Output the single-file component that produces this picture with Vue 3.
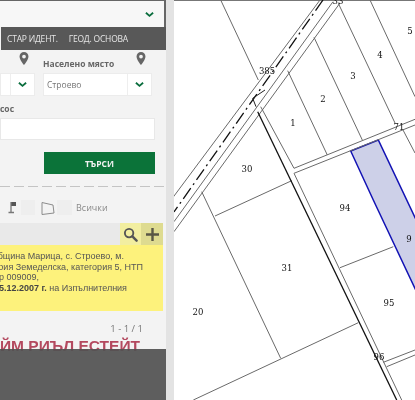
<script setup>
const lines = [
  [220.7,0,258.3,80],[320,0,173.3,197],[333,1.7,174,221.7],[340,3,174,231.7],
  [338.3,3.3,395,123],[403,130,415,153],[370,0,415,96.7],[314,37.3,362.3,140],[287.7,70.7,327.3,155],
  [260.7,106.7,294,168.3],[294,168.3,415,119.3],[294,173.3,415,125],[294,173.3,401.7,400],
  [215,216,291.7,180.7],[201.7,191.7,280.7,358.3],[193.3,400,358.3,322.7],[340,267.7,393.3,246.7],
  [383.3,362.3,415,350],[386.7,366.7,415,355]
]
const labels = [
  ['385',267,74],['5',410,34],['4',380,58],['3',353,79],['2',323,102],['1',293,126],['71',399,130],
  ['30',247,172],['94',345,211],['9',409,242],['31',287,271],['95',389,306],['20',198,315],['96',379,360],['33',338,4]
]
</script>

<template>
  <div class="page">
    <aside class="panel">
      <div class="top-select">
        <svg class="chev" viewBox="0 0 10 7"><path d="M1 1.500l4 3.500 4-3.500" /></svg>
      </div>
      <nav class="tabs">
        <span class="tab-stub"></span>
        <span class="tab">СТАР ИДЕНТ.</span>
        <span class="tab">ГЕОД. ОСНОВА</span>
      </nav>
      <div class="fields">
        <div class="field first">
          <div class="label-row">
            <svg class="pin" viewBox="0 0 12 16"><path fill-rule="evenodd" d="M6 0a5.500 5.500 0 0 0-5.500 5.500C.5 9.500 6 16 6 16s5.500-6.500 5.500-10.500A5.500 5.500 0 0 0 6 0zm0 3.300a2.300 2.300 0 1 1 0 4.600 2.300 2.300 0 0 1 0-4.600z" /></svg>
          </div>
          <div class="select">
            <span class="value"></span>
            <span class="arrow"><svg class="chev" viewBox="0 0 10 7"><path d="M1 1.500l4 3.500 4-3.500" /></svg></span>
          </div>
        </div>
        <div class="field second">
          <div class="label-row">
            <span class="label">Населено място</span>
            <svg class="pin" viewBox="0 0 12 16"><path fill-rule="evenodd" d="M6 0a5.500 5.500 0 0 0-5.500 5.500C.5 9.500 6 16 6 16s5.500-6.500 5.500-10.500A5.500 5.500 0 0 0 6 0zm0 3.300a2.300 2.300 0 1 1 0 4.600 2.300 2.300 0 0 1 0-4.600z" /></svg>
          </div>
          <div class="select">
            <span class="value">Строево</span>
            <span class="arrow"><svg class="chev" viewBox="0 0 10 7"><path d="M1 1.500l4 3.500 4-3.500" /></svg></span>
          </div>
        </div>
      </div>
      <div class="label addr">сос</div>
      <div class="input"></div>
      <button class="search">ТЪРСИ</button>
      <div class="dash"></div>
      <div class="filters">
        <svg class="f-flag" viewBox="0 0 10 13"><path d="M3 1h5v4H3z" fill="#555" /><path d="M3 1v10M.5 11.500h5.500" stroke="#777" stroke-width="1.300" fill="none" /></svg>
        <span class="ghost g1"></span>
        <svg class="f-poly" viewBox="0 0 14 14"><path d="M1 1.500l11 2.500 1 8-12 1.500z" fill="none" stroke="#8c8c8c" /></svg>
        <span class="ghost g2"></span>
        <span class="all">Всички</span>
      </div>
      <div class="card">
        <div class="card-head">
          <span class="head-fill"></span>
          <span class="btn-search">
            <svg viewBox="0 0 16 16"><circle cx="6.500" cy="6.500" r="4.500" fill="none" stroke="#555" stroke-width="2" /><path d="M10 10l4.500 4.500" stroke="#555" stroke-width="2.600" stroke-linecap="round" /></svg>
          </span>
          <span class="btn-plus">
            <svg viewBox="0 0 14 14"><path d="M7 0v14M0 7h14" stroke="#595745" stroke-width="2.600" /></svg>
          </span>
        </div>
        <div class="card-body">
          <div class="line l1"><span>Община Марица, с. Строево, м.</span></div>
          <div class="line l2"><span>територия Земеделска, категория 5, НТП</span></div>
          <div class="line l3"><span>р 009009,</span></div>
          <div class="line l4"><span><b>05.12.2007 г.</b> на Изпълнителния</span></div>
        </div>
      </div>
      <div class="pager">1 - 1 / 1</div>
      <div class="brand"><span>ЙМ РИЪЛ ЕСТЕЙТ</span></div>
      <footer class="foot"></footer>
    </aside>
    <div class="gutter"></div>
    <svg class="map" viewBox="174 0 241 400">
      <polygon class="parcel" points="350.700,151 378.300,140 420,228 420,299 373.300,200" />
      <line v-for="(l, i) in lines" :key="i" :x1="l[0]" :y1="l[1]" :x2="l[2]" :y2="l[3]" class="ln" />
      <line x1="323" y1="0" x2="174" y2="212" class="axis" />
      <polyline points="257.700,111.700 396.700,400" class="bold" />
      <polyline points="265,90 252.700,98.300 256,106.700" class="thin" />
      <text v-for="t in labels" :key="t[0]" :x="t[1]" :y="t[2]" class="num">{{ t[0] }}</text>
    </svg>
  </div>
</template>

<style scoped>
.page {
  width: 415px;
  height: 400px;
  display: flex;
  overflow: hidden;
  background: #fff;
  font-family: "Open Sans", "Liberation Sans", sans-serif;
  box-shadow: inset 0 1px 0 #777;
  filter: blur(0.35px);
}
.panel {
  width: 166px;
  height: 400px;
  flex: none;
  overflow: hidden;
  background: #f3f3f3;
  display: flex;
  flex-direction: column;
  border-top: 1px solid #666;
  box-sizing: border-box;
}
.top-select {
  height: 26px;
  box-sizing: border-box;
  background: #f7f7f7;
  border-right: 2px solid #666;
  display: flex;
  align-items: center;
  justify-content: flex-end;
  padding-right: 10px;
  flex: none;
}
.chev { width: 9px; height: 7px; }
.chev path { fill: none; stroke: #0b6e3e; stroke-width: 2; }
.tabs {
  height: 23px;
  flex: none;
  background: #585858;
  display: flex;
  align-items: center;
  color: #e6e6e6;
  font-size: 8.500px;
  letter-spacing: -0.2px;
}
.tab-stub { width: 1px; height: 100%; background: #f3f3f3; margin-right: 6px; }
.tab { margin-right: 11px; white-space: nowrap; }
.tab + .tab { margin-right: 0; }
.fields { display: flex; height: 46px; flex: none; }
.field { display: flex; flex-direction: column; flex: none; }
.first { width: 35px; margin-right: 8px; }
.second { width: 109px; }
.label-row {
  height: 23px;
  position: relative;
  display: flex;
  align-items: flex-end;
}
.pin { width: 10px; height: 13px; fill: #666; flex: none; }
.first .pin { margin: 0 0 8px 19px; }
.second .pin { position: absolute; left: 93px; top: 2px; }
.label { font-size: 8.500px; font-weight: 700; color: #666; line-height: 12px; padding-bottom: 3px; white-space: nowrap; }
.select {
  height: 23px;
  background: #fff;
  border: 1px solid #ececec;
  box-sizing: border-box;
  display: flex;
  align-items: center;
}
.value { flex: 1; font-size: 8.500px; color: #777; padding-left: 3px; }
.arrow {
  width: 23px;
  height: 100%;
  flex: none;
  border-left: 1px solid #eee;
  display: flex;
  align-items: center;
  justify-content: center;
}
.addr { margin-top: 7px; height: 12px; line-height: 12px; padding-bottom: 0; flex: none; }
.input {
  flex: none;
  margin-top: 3px;
  width: 155px;
  height: 22px;
  box-sizing: border-box;
  background: #fff;
  border: 1px solid #e8e8e8;
}
.search {
  flex: none;
  margin: 12px 0 0 44px;
  width: 111px;
  height: 22px;
  padding: 0;
  border: none;
  background: #0b7339;
  color: #f2f2f2;
  font: 700 8.500px "Open Sans", "Liberation Sans", sans-serif;
}
.dash {
  flex: none;
  margin-top: 12px;
  height: 1px;
  width: 164px;
  background: repeating-linear-gradient(90deg, #c4c4c4 0 10px, transparent 10px 14px);
}
.filters {
  flex: none;
  height: 36px;
  box-sizing: border-box;
  padding-top: 5px;
  display: flex;
  align-items: center;
}
.f-flag { width: 10px; height: 13px; margin-left: 8px; flex: none; }
.ghost { height: 15px; background: #eee; flex: none; }
.g1 { width: 14px; margin-left: 3px; }
.f-poly { width: 14px; height: 14px; margin-left: 6px; flex: none; }
.g2 { width: 15px; margin-left: 2px; }
.all { margin-left: 4px; font-size: 9px; color: #8a8a8a; }
.card { flex: none; width: 163px; }
.card-head { height: 22px; display: flex; background: #e9e9e9; }
.head-fill { flex: 1; }
.btn-search, .btn-plus {
  display: flex;
  align-items: center;
  justify-content: center;
  flex: none;
}
.btn-search { width: 21px; background: #f2eea0; }
.btn-search svg { width: 15px; height: 15px; }
.btn-plus { width: 22px; background: #dedb90; }
.btn-plus svg { width: 13px; height: 13px; }
.card-body {
  height: 66px;
  box-sizing: border-box;
  background: #fdf27c;
  padding-top: 6px;
  font-family: "Liberation Sans", Arial, sans-serif;
  font-size: 9px;
  color: #555;
}
.line {
  height: 10.500px;
  line-height: 10.500px;
  display: flex;
  justify-content: flex-end;
  overflow: hidden;
  white-space: nowrap;
}
.line span { flex: none; }
.line b { color: #444; }
.l1 { width: 124px; }
.l2 { width: 143px; }
.l3 { width: 39px; }
.l4 { width: 127px; }
.pager {
  flex: none;
  height: 14px;
  margin-top: 11px;
  width: 143px;
  text-align: right;
  font-size: 9.500px;
  line-height: 14px;
  color: #777;
}
.brand {
  flex: none;
  width: 140px;
  height: 14px;
  margin-top: 3px;
  display: flex;
  justify-content: flex-end;
  white-space: nowrap;
  font: 700 15.500px/14px "Liberation Sans", Arial, sans-serif;
  color: #b3495f;
}
.brand span { flex: none; }
.foot {
  flex: 1;
  margin-top: -4px;
  background: rgba(82, 82, 82, 0.93);
  position: relative;
}
.gutter { width: 8px; flex: none; background: #e3e3e3; }
.map { flex: none; width: 241px; height: 400px; display: block; }
.ln { stroke: #6a6a6a; stroke-width: 1; }
.axis { stroke: #111; stroke-width: 1.300; stroke-dasharray: 13 4 2 4; }
.bold { stroke: #111; stroke-width: 1.300; fill: none; }
.thin { stroke: #222; stroke-width: 1; fill: none; }
.parcel { fill: #cdd0e8; stroke: #1212b4; stroke-width: 1.500; }
.num {
  font-family: "DejaVu Serif", "Liberation Serif", serif;
  font-size: 8.500px;
  text-anchor: middle;
  fill: #111;
}
</style>
